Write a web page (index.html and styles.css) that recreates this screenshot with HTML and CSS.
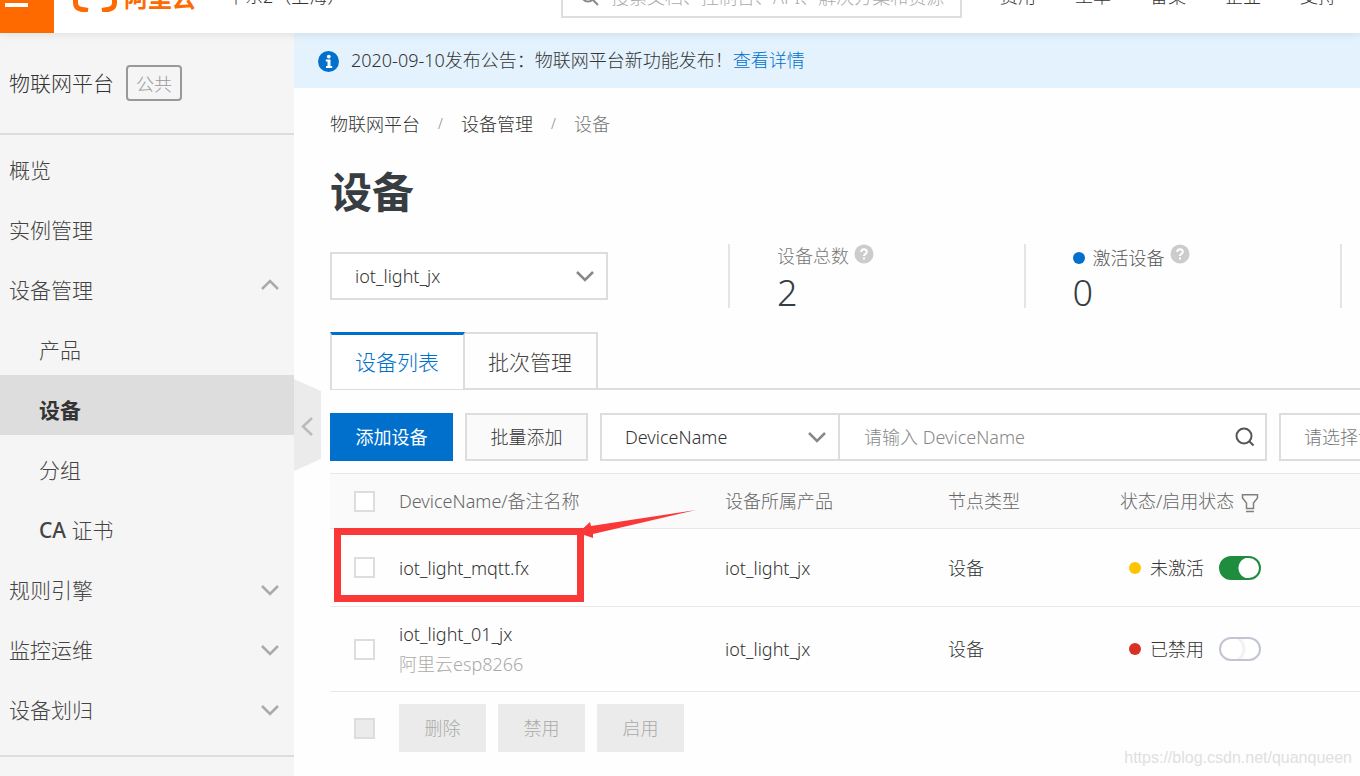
FILE: index.html
```html
<!DOCTYPE html>
<html lang="zh-CN">
<head>
<meta charset="utf-8">
<meta name="viewport" content="width=device-width, initial-scale=1">
<title>物联网平台 - 设备</title>
<link rel="stylesheet" href="styles.css">
</head>
<body>
<header class="topbar">
  <button class="menu-btn" type="button" aria-label="菜单">
    <span class="menu-line"></span><span class="menu-line"></span><span class="menu-line"></span>
  </button>
  <a class="logo" href="#">
    <svg width="44" height="30" viewBox="0 0 44 30" fill="none" stroke="#ff6a00" stroke-width="5" aria-hidden="true">
      <path d="M17 2.5H9Q2.5 2.5 2.5 9V21Q2.5 26 8 27.3L15 28.5M27 2.5H35Q41.500 2.500 41.500 9V21Q41.500 26 36 27.300L29 28.500M16 15H28"/>
    </svg>
    <span>阿里云</span>
  </a>
  <span class="region">华东2（上海）</span>
  <label class="search">
    <svg width="20" height="20" viewBox="0 0 20 20" fill="none" stroke="#888" stroke-width="2" aria-hidden="true"><circle cx="8" cy="8" r="6.500"/><path d="M12.500 12.500L18 18"/></svg>
    <input type="text" aria-label="搜索" placeholder="搜索文档、控制台、API、解决方案和资源">
  </label>
  <nav class="topnav" aria-label="全局">
    <a href="#">费用</a><a href="#">工单</a><a href="#">备案</a><a href="#">企业</a><a href="#">支持</a>
  </nav>
</header>

<div class="layout">
  <aside class="sidebar">
    <div class="product"><span class="product-name">物联网平台</span><span class="product-tag">公共</span></div>
    <nav class="menu" aria-label="产品导航">
      <a class="item" href="#">概览</a>
      <a class="item" href="#">实例管理</a>
      <a class="item open" href="#">设备管理<svg class="chevron" viewBox="0 0 20 12"><path d="M2 10L10 2L18 10"/></svg></a>
      <a class="item sub" href="#">产品</a>
      <a class="item sub active" href="#">设备</a>
      <a class="item sub" href="#">分组</a>
      <a class="item sub" href="#"><span><span class="latin">CA</span> 证书</span></a>
      <a class="item" href="#">规则引擎<svg class="chevron" viewBox="0 0 20 12"><path d="M2 2L10 10L18 2"/></svg></a>
      <a class="item" href="#">监控运维<svg class="chevron" viewBox="0 0 20 12"><path d="M2 2L10 10L18 2"/></svg></a>
      <a class="item" href="#">设备划归<svg class="chevron" viewBox="0 0 20 12"><path d="M2 2L10 10L18 2"/></svg></a>
    </nav>
  </aside>

  <main class="main">
    <button class="collapse" type="button" aria-label="收起导航">
      <svg width="27" height="92" viewBox="0 0 27 92" aria-hidden="true"><path d="M0 0L27 12V80L0 92Z" fill="#ebebeb"/><path d="M18 39L9 47.500L18 56" fill="none" stroke="#bbb" stroke-width="2.500"/></svg>
    </button>
    <div class="notice">
      <svg width="21" height="21" viewBox="0 0 21 21" aria-hidden="true"><circle cx="10.500" cy="10.500" r="10.500" fill="#0070cc"/><circle cx="10.800" cy="5.600" r="1.900" fill="#fff"/><path d="M7.800 8.500H12.500V15H14.200V17H8V15H9.500V10.500H7.800Z" fill="#fff"/></svg>
      <p>2020-09-10发布公告：物联网平台新功能发布！<a href="#">查看详情</a></p>
    </div>
    <div class="content">
      <nav class="crumbs" aria-label="面包屑">
        <a href="#">物联网平台</a><span class="sep">/</span><a href="#">设备管理</a><span class="sep">/</span><span class="current">设备</span>
      </nav>
      <h1>设备</h1>

      <div class="summary">
        <div class="select product-select">
          <select aria-label="产品"><option>iot_light_jx</option></select>
          <svg class="chevron" viewBox="0 0 20 12"><path d="M2 2L10 10L18 2"/></svg>
        </div>
        <div class="stats">
          <div class="stat">
            <div class="stat-label">设备总数<svg class="help" viewBox="0 0 20 20"><circle cx="10" cy="10" r="9.500"/><path d="M7.200 8Q7.200 5.200 10 5.200T12.800 7.800Q12.800 9.300 11.200 10.100Q10 10.700 10 12M10 13.500V15.500"/></svg></div>
            <div class="stat-value">2</div>
          </div>
          <div class="stat">
            <div class="stat-label strong"><span class="dot blue"></span>激活设备<svg class="help" viewBox="0 0 20 20"><circle cx="10" cy="10" r="9.500"/><path d="M7.200 8Q7.200 5.200 10 5.200T12.800 7.800Q12.800 9.300 11.200 10.100Q10 10.700 10 12M10 13.500V15.500"/></svg></div>
            <div class="stat-value">0</div>
          </div>
          <div class="stat"></div>
        </div>
      </div>

      <div class="tabs" role="tablist">
        <button class="tab selected" type="button" role="tab" aria-selected="true">设备列表</button>
        <button class="tab" type="button" role="tab" aria-selected="false">批次管理</button>
      </div>

      <div class="toolbar">
        <button class="btn primary" type="button">添加设备</button>
        <button class="btn" type="button">批量添加</button>
        <div class="filter">
          <div class="select field-select">
            <select aria-label="搜索字段"><option>DeviceName</option></select>
            <svg class="chevron" viewBox="0 0 20 12"><path d="M2 2L10 10L18 2"/></svg>
          </div>
          <input class="filter-input" type="text" aria-label="DeviceName" placeholder="请输入 DeviceName">
          <button class="filter-go" type="button" aria-label="搜索">
            <svg width="20" height="20" viewBox="0 0 20 20" fill="none" stroke="#555" stroke-width="2" aria-hidden="true"><circle cx="9" cy="9" r="7.500"/><path d="M14 14L18.500 18.500"/></svg>
          </button>
        </div>
        <div class="select tag-select"><select aria-label="设备标签"><option>请选择设备标签</option></select></div>
      </div>

      <div class="table-wrap">
        <table>
          <colgroup><col class="c-check"><col class="c-name"><col class="c-product"><col class="c-type"><col></colgroup>
          <thead>
            <tr>
              <th><input type="checkbox" aria-label="全选"></th>
              <th>DeviceName/备注名称</th><th>设备所属产品</th><th>节点类型</th>
              <th><span class="status-head">状态/启用状态<svg width="18" height="20" viewBox="0 0 18 20" fill="none" stroke="#808080" stroke-width="1.500" aria-hidden="true"><path d="M1.500 1.800H16.500V5L12.500 10V15.500H5.500V10L1.500 5ZM5 18.500H13"/></svg></span></th>
            </tr>
          </thead>
          <tbody>
            <tr class="row-one">
              <td><input type="checkbox" aria-label="iot_light_mqtt.fx"></td>
              <td>iot_light_mqtt.fx</td><td>iot_light_jx</td><td>设备</td>
              <td><span class="status"><span class="dot yellow"></span>未激活<input class="switch" type="checkbox" role="switch" aria-label="启用 iot_light_mqtt.fx" checked></span></td>
            </tr>
            <tr class="row-two">
              <td><input type="checkbox" aria-label="iot_light_01_jx"></td>
              <td>iot_light_01_jx<div class="remark">阿里云esp8266</div></td><td>iot_light_jx</td><td>设备</td>
              <td><span class="status"><span class="dot red"></span>已禁用<input class="switch" type="checkbox" role="switch" aria-label="启用 iot_light_01_jx"></span></td>
            </tr>
          </tbody>
        </table>
        <div class="batch">
          <input type="checkbox" aria-label="选择全部" disabled>
          <button class="batch-btn" type="button" disabled>删除</button>
          <button class="batch-btn" type="button" disabled>禁用</button>
          <button class="batch-btn" type="button" disabled>启用</button>
        </div>
        <svg class="mark" width="370" height="100" viewBox="0 0 370 100" aria-hidden="true">
          <rect x="7.500" y="24.500" width="243" height="67" fill="none" stroke="#fb3838" stroke-width="7"/>
          <path d="M366 3L261 19L260 15L248 26L263 31L263 27Z" fill="#fb3838"/>
        </svg>
      </div>
    </div>
    <div class="watermark">https://blog.csdn.net/quanqueen</div>
  </main>
</div>
</body>
</html>
```
FILE: styles.css
```css
* { box-sizing: border-box; }

html, body { margin: 0; }

body {
  min-height: 100vh;
  display: flex;
  flex-direction: column;
  overflow: hidden;
  background: #fefefe;
  color: #333;
  font: 300 18px/24px "Noto Sans", "Noto Sans CJK SC", sans-serif;
}

button, input, select { font: inherit; color: inherit; margin: 0; border-radius: 0; }
button { border: 0; padding: 0; background: none; cursor: pointer; }
a { color: inherit; text-decoration: none; }
p, h1 { margin: 0; }
svg { flex: none; }

/* Top bar, scrolled partly out of view */
.topbar {
  height: 76px;
  margin-top: -43px;
  display: flex;
  align-items: center;
  background: #fff;
  box-shadow: 0 2px 8px rgba(0, 0, 0, .08);
  position: relative;
  z-index: 2;
}
.menu-btn {
  align-self: stretch;
  width: 54px;
  padding: 2px 0 0 5px;
  background: #ff6a00;
  display: flex;
  flex-direction: column;
  justify-content: center;
  gap: 5px;
}
.menu-line { width: 23px; height: 4px; background: #fff; }
.logo { display: flex; align-items: center; gap: 7px; margin-left: 19px; color: #ff6a00; font-size: 24px; font-weight: 700; }
.logo svg { margin-top: 4px; }
.logo span { padding-top: 6px; }
.region { width: 334px; margin-left: 31px; padding-top: 2px; white-space: nowrap; }
.search {
  flex: 1;
  height: 48px;
  display: flex;
  align-items: center;
  gap: 11px;
  margin-bottom: 2px;
  padding: 6px 16px 0 17px;
  border: 2px solid #ddd;
}
.search input { flex: 1; min-width: 0; padding: 0; border: 0; outline: 0; background: none; }
input::placeholder { color: #888; opacity: 1; }
.search input::placeholder { color: #aaa; }
.topnav { display: flex; gap: 39px; padding: 2px 24px 0 38px; }

.layout { flex: 1; display: flex; }

/* Sidebar */
.sidebar { width: 294px; flex: none; background: #f5f5f5; }
.product { height: 102px; display: flex; align-items: center; gap: 12px; padding-left: 9px; border-bottom: 2px solid #ddd; }
.product-name { font-size: 21px; }
.product-tag { height: 36px; padding: 0 8px; border: 2px solid #999; border-radius: 4px; color: #999; line-height: 34px; }
.menu { padding-bottom: 20px; border-bottom: 2px solid #ddd; }
.item {
  height: 60px;
  display: flex;
  align-items: center;
  justify-content: space-between;
  padding: 10px 14px 0 9px;
  color: #444;
  font-size: 21px;
}
.sub { padding-left: 39px; }
.active { background: #ddd; color: #333; font-weight: 700; }
.latin { font-weight: 500; }
.chevron { width: 20px; height: 12px; fill: none; stroke: #888; stroke-width: 2.5; }
.item .chevron { stroke: #aaa; }
.open .chevron { margin-bottom: 10px; }

/* Main column */
.main { flex: 1; min-width: 0; position: relative; overflow: hidden; }
.collapse { position: absolute; left: 0; top: 346px; line-height: 0; }
.notice { height: 55px; display: flex; align-items: center; gap: 12px; padding: 2px 24px 0; background: #e3f2fd; }
.notice p { padding-bottom: 3px; }
.notice a { color: #0070cc; }
.content { padding: 24px 0 0 36px; }
.crumbs { display: flex; }
.sep { width: 41px; text-align: center; color: #888; font-size: 14px; }
.current { color: #777; }
h1 { margin-top: 28px; font-size: 42px; line-height: 56px; font-weight: 700; color: #373d41; }

.select { display: grid; align-items: center; background: #fff; border: 2px solid #ddd; }
.select > * { grid-area: 1 / 1; }
.select select { width: 100%; height: 44px; padding: 0 44px 0 23px; appearance: none; border: 0; outline: 0; background: none; }
.select .chevron { justify-self: end; margin-right: 11px; pointer-events: none; }

.summary { height: 64px; display: flex; align-items: center; margin-top: 24px; }
.product-select { flex: none; width: 278px; }
.stats { flex: 1; height: 64px; display: flex; margin-left: 120px; }
.stat { flex: 295 1 0; min-width: 0; padding-left: 47px; border-left: 2px solid #e5e5e5; white-space: nowrap; }
.stat:nth-child(2) { flex-grow: 320; }
.stat:last-child { flex: 0 0 20px; padding: 0; }
.stat-label { height: 24px; display: flex; align-items: center; color: #777; }
.stat-label.strong { padding-top: 3px; color: #555; }
.stat-label.strong .help { margin-bottom: 7px; }
.stat-label .dot { margin-right: 8px; }
.stat-value { font-size: 36px; line-height: 50px; color: #373d41; }
.help { width: 20px; height: 20px; margin-left: 5px; margin-bottom: 4px; fill: none; stroke: #fff; stroke-width: 2; }
.help circle { fill: #ccc; stroke: none; }
.dot { width: 12px; height: 12px; flex: none; border-radius: 50%; }
.blue { background: #0070cc; }
.yellow { background: #ffc400; }
.red { background: #d93026; }

.tabs { display: flex; height: 58px; margin-top: 24px; border-bottom: 2px solid #ddd; }
.tab { height: 56px; padding: 2px 24px 0 23px; border: 2px solid #ddd; border-left-width: 0; border-bottom: 0; color: #444; font-size: 21px; }
.tab.selected { height: 57px; padding-top: 0; border-left-width: 2px; border-top: 3px solid #0070cc; background: #fff; color: #0070cc; }

.toolbar { display: flex; gap: 12px; margin-top: 23px; }
.btn { width: 123px; height: 48px; flex: none; border: 2px solid #ddd; background: #fafafa; color: #333; }
.btn.primary { border-color: #0070cc; background: #0070cc; color: #fff; font-weight: 400; }
.filter { flex: 1; min-width: 0; height: 48px; display: flex; border: 2px solid #ddd; background: #fff; }
.field-select { width: 238px; flex: none; border-width: 0 2px 0 0; }
.filter-input { flex: 1; min-width: 0; padding: 0 24px; border: 0; outline: 0; background: none; }
.filter-go { width: 40px; display: grid; place-items: center; }
.tag-select { width: 81px; flex: none; overflow: hidden; border-right: 0; color: #777; }
.tag-select select { width: 260px; }

/* Device table */
.table-wrap { position: relative; margin-top: 12px; }
table { width: 100%; table-layout: fixed; border-collapse: separate; border-spacing: 0; }
.c-check { width: 69px; }
.c-name { width: 326px; }
.c-product { width: 223px; }
.c-type { width: 172px; }
th, td { padding: 0; text-align: left; font-weight: inherit; border-bottom: 1px solid #e8e8e8; }
th { height: 56px; border-top: 1px solid #e8e8e8; background: #fafafa; color: #666; }
.row-one td { height: 78px; }
.row-two td { height: 85px; }
th:first-child, td:first-child { padding-left: 24px; }
.remark { margin-top: 6px; color: #aaa; }
.status-head { display: flex; align-items: center; gap: 7px; }
.status-head svg { margin-top: 4px; }
.status { display: flex; align-items: center; padding-left: 9px; }
.status .dot { margin-right: 9px; }

input[type="checkbox"] { display: block; width: 21px; height: 21px; appearance: none; border: 2px solid #ddd; background: #fff; }
input[type="checkbox"]:disabled { background: #ebebeb; }
input.switch[type="checkbox"] { width: 42px; height: 24px; margin-left: 15px; border-color: #c1c5d3; border-radius: 12px; background: radial-gradient(circle at 10px 10px, #fff 11px, #eee 12px, #fff 16px); }
input.switch[type="checkbox"]:checked { border-color: #1e8e3e; background: radial-gradient(circle at 28px 10px, #fff 10px, #1e8e3e 11px); }

.batch { display: flex; align-items: center; gap: 12px; padding: 12px 24px; }
.batch input { margin-right: 12px; }
.batch-btn { width: 87px; height: 48px; background: #ebebeb; color: #aaa; }
.mark { position: absolute; left: 0; top: 34px; pointer-events: none; }
.watermark { position: absolute; right: 8px; bottom: 6px; color: #e0e0e0; font: 16px/24px "Liberation Sans", Arial, sans-serif; }
```
